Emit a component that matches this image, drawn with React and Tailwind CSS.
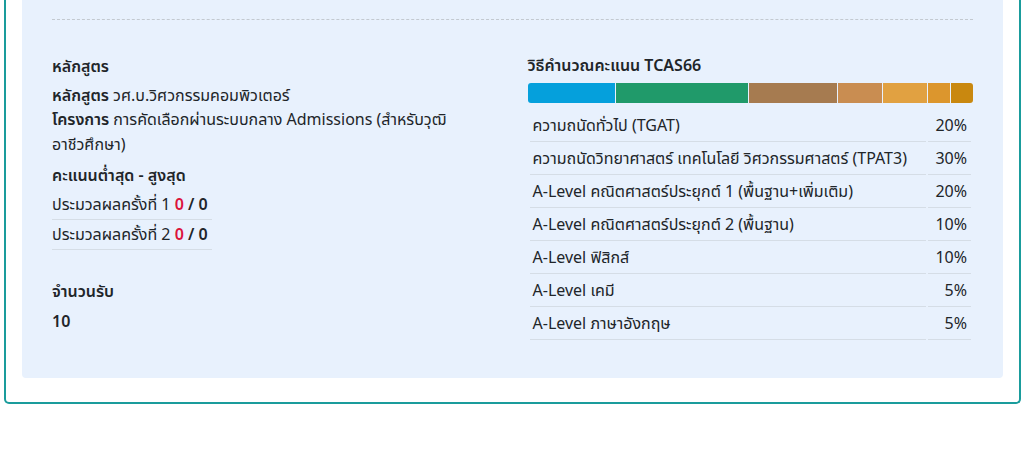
const segments = [
  { w: 20, color: "bg-[#05a0dc]" },
  { w: 30, color: "bg-[#209a6a]" },
  { w: 20, color: "bg-[#a67b50]" },
  { w: 10, color: "bg-[#c98d51]" },
  { w: 10, color: "bg-[#e1a141]" },
  { w: 5, color: "bg-[#dc962d]" },
  { w: 5, color: "bg-[#c9880f]" },
];

const subjects = [
  ["ความถนัดทั่วไป (TGAT)", "20%"],
  ["ความถนัดวิทยาศาสตร์ เทคโนโลยี วิศวกรรมศาสตร์ (TPAT3)", "30%"],
  ["A-Level คณิตศาสตร์ประยุกต์ 1 (พื้นฐาน+เพิ่มเติม)", "20%"],
  ["A-Level คณิตศาสตร์ประยุกต์ 2 (พื้นฐาน)", "10%"],
  ["A-Level ฟิสิกส์", "10%"],
  ["A-Level เคมี", "5%"],
  ["A-Level ภาษาอังกฤษ", "5%"],
];

const rounds = ["ประมวลผลครั้งที่ 1", "ประมวลผลครั้งที่ 2"];

export default function App() {
  return (
    <div
      className="bg-white text-[16px] text-[#212529] px-[4px] pr-[12px]"
      style={{ fontFamily: '"Noto Sans", "Noto Sans Thai", sans-serif' }}
    >
      <div className="border-x-2 border-b-2 border-[#1a9c9c] rounded-b-[5px] px-[16px] pb-[24px]">
        <div className="bg-[#e8f1fd] rounded-b-[4px] px-[30px] pt-[19px] pb-[38px]">
          <div className="border-t border-dashed border-[#c3c9d0]" />
          <div className="grid grid-cols-2 gap-x-[30px] mt-[33px]">
            {/* left */}
            <div className="leading-[25px] pt-[1px]">
              <div className="font-semibold">หลักสูตร</div>
              <div className="mt-[4px]">
                <span className="font-semibold">หลักสูตร</span> วศ.บ.วิศวกรรมคอมพิวเตอร์
              </div>
              <div className="-mt-[1px]">
                <span className="font-semibold">โครงการ</span> การคัดเลือกผ่านระบบกลาง Admissions (สำหรับวุฒิ
                อาชีวศึกษา)
              </div>
              <div className="font-semibold mt-[6px]">คะแนนต่ำสุด - สูงสุด</div>
              <table className="mt-[2px] w-[160px]">
                <tbody>
                  {rounds.map((r) => (
                    <tr key={r} className="border-b border-[#d5dde6]">
                      <td className="py-[2px] whitespace-nowrap">
                        {r} <span className="font-semibold text-[#dc143c]">0</span>{" "}
                        <span className="font-semibold">/ 0</span>
                      </td>
                    </tr>
                  ))}
                </tbody>
              </table>
              <div className="font-semibold mt-[29px]">จำนวนรับ</div>
              <div className="font-semibold mt-[5px]">10</div>
            </div>

            {/* right */}
            <div>
              <div className="font-semibold leading-[25px]">วิธีคำนวณคะแนน TCAS66</div>
              <div className="flex h-[20px] mt-[5px] rounded-[3px] overflow-hidden gap-[1px]">
                {segments.map((s, i) => (
                  <div key={i} className={s.color} style={{ flexGrow: s.w, flexBasis: 0 }} />
                ))}
              </div>
              <table className="w-full border-separate border-spacing-x-[2px] border-spacing-y-0 mt-[6px]">
                <tbody>
                  {subjects.map(([name, pct]) => (
                    <tr key={name}>
                      <td className="h-[33px] px-[3px] border-b border-[#d5dde6]">{name}</td>
                      <td className="h-[33px] px-[4px] text-right border-b border-[#d5dde6] w-[43px]">
                        {pct}
                      </td>
                    </tr>
                  ))}
                </tbody>
              </table>
            </div>
          </div>
        </div>
      </div>
    </div>
  );
}
